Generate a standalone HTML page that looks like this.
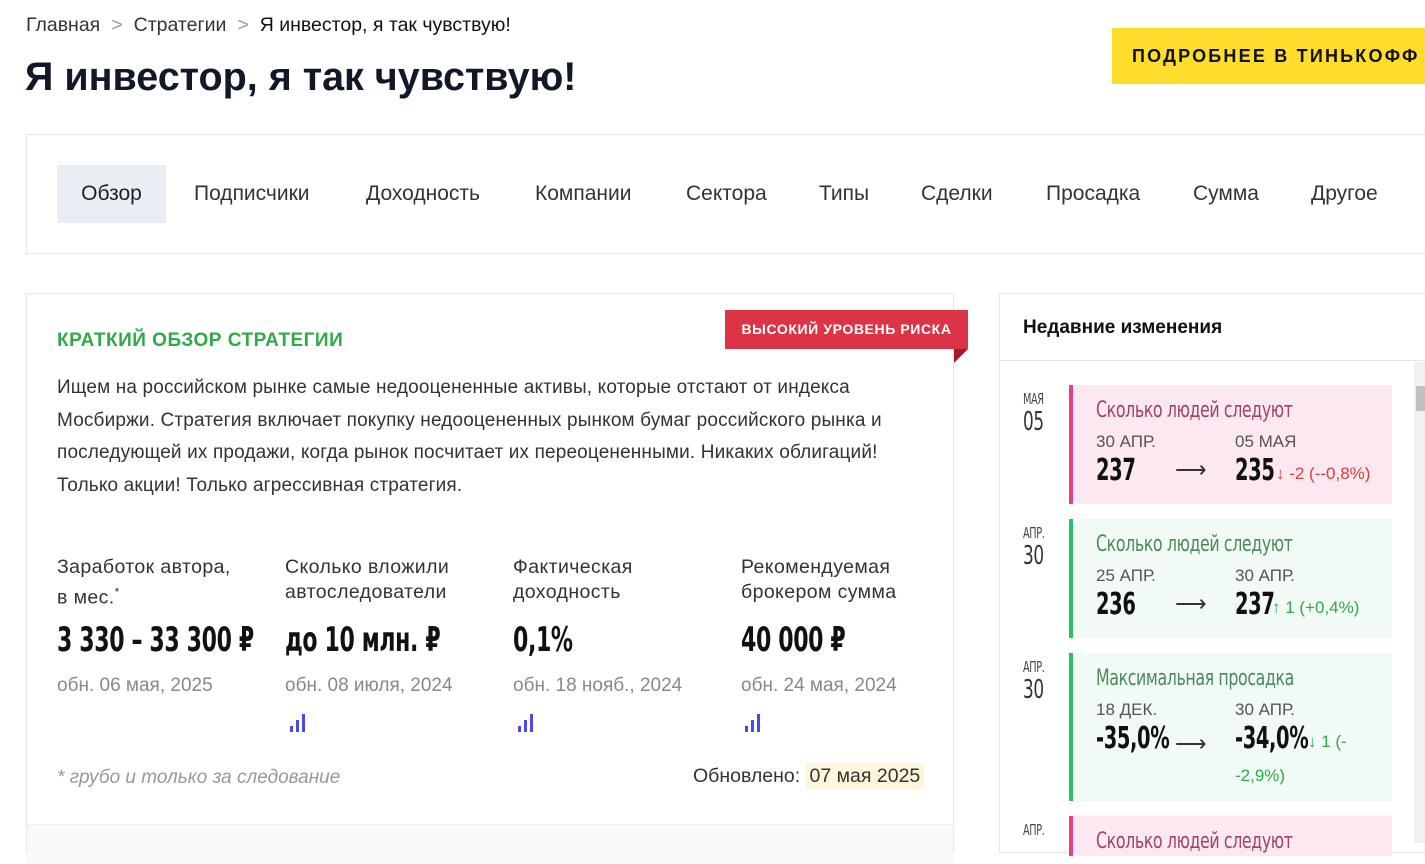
<!DOCTYPE html>
<html><head><meta charset="utf-8"><style>
*{box-sizing:border-box;margin:0;padding:0}
body{width:1425px;height:843px;overflow:hidden;background:#fff;font-family:"Liberation Sans",sans-serif;color:#222;position:relative}
.a{position:absolute}
.cond{font-family:"DejaVu Sans Condensed","Liberation Sans",sans-serif;font-weight:bold;display:inline-block;transform:scaleX(.72);transform-origin:left center;letter-spacing:-0.5px}
.bc{left:26px;top:14px;font-size:19.5px;color:#333}
.bc span.s{color:#999;margin:0 11px}
h1{position:absolute;left:25px;top:55px;font-size:39.5px;font-weight:bold;color:#111827}
.btn{left:1112px;top:28px;width:320px;height:56px;background:#ffdd2d;font-weight:bold;font-size:18px;letter-spacing:2.2px;line-height:56px;padding-left:20px;color:#111}
.tabs{left:26px;top:134px;width:1410px;height:120px;border:1px solid #e7e7e7}
.tab{position:absolute;top:30px;height:58px;line-height:58px;font-size:21px;color:#333}
.card{left:26px;top:293px;width:928px;height:560px;border:1px solid #e7e7e7}
.green{left:57px;top:330px;font-size:19px;font-weight:bold;color:#2eaa4a;letter-spacing:.5px}
.desc{left:57px;top:372px;width:870px;font-size:19px;line-height:32.5px;color:#333;letter-spacing:.15px}
.lbl{font-size:19.5px;line-height:25px;color:#333;top:555px;letter-spacing:.4px}
.val{top:620px;font-size:34px;color:#111;height:44px}
.upd{top:675px;font-size:19px;color:#888}
.bars{top:713px}
.red{left:725px;top:310px;width:243px;height:39px;background:#db3446;color:#fff;font-weight:bold;font-size:14px;line-height:39px;text-align:center;letter-spacing:.6px}
.fold{left:954px;top:349px;width:0;height:0;border-top:14px solid #a61b2b;border-right:14px solid transparent}
.side{left:999px;top:293px;width:440px;height:560px;border:1px solid #e7e7e7}
.ev{left:1069px;width:323px;padding-left:27px}
.ev.p{background:#fce8f0;border-left:4px solid #e83e8c}
.ev.g{background:#f1faf5;border-left:4px solid #28c266}
.ev .t{position:absolute;left:23px;top:12px;font-size:22px}
.ev .t .cond{font-weight:normal;transform:scaleX(.8)}
.p .t{color:#a0426a}.g .t{color:#4a8a5c}
.dt{font-size:17px;color:#555;position:absolute;top:47px}
.num{position:absolute;top:68px;font-size:30px;color:#111}
.mon{left:1023px;font-size:15px;color:#444}
.day{left:1023px;font-size:26px;color:#333}
.day .cond,.mon .cond{font-weight:normal}
</style></head><body>
<div class="a bc">Главная<span class="s">&gt;</span>Стратегии<span class="s">&gt;</span><span style="color:#111">Я инвестор, я так чувствую!</span></div>
<h1>Я инвестор, я так чувствую!</h1>
<div class="a btn">ПОДРОБНЕЕ В ТИНЬКОФФ</div>
<div class="a tabs">
<div class="tab" style="left:30px;width:109px;background:#e9eef4;text-align:center;color:#222">Обзор</div>
<div class="tab" style="left:167px">Подписчики</div>
<div class="tab" style="left:339px">Доходность</div>
<div class="tab" style="left:508px">Компании</div>
<div class="tab" style="left:659px">Сектора</div>
<div class="tab" style="left:792px">Типы</div>
<div class="tab" style="left:894px">Сделки</div>
<div class="tab" style="left:1019px">Просадка</div>
<div class="tab" style="left:1166px">Сумма</div>
<div class="tab" style="left:1284px">Другое</div>
</div>
<div class="a card"><div style="position:absolute;left:0;right:0;top:530px;height:40px;background:#f9f9f9;border-top:1px solid #eee"></div></div>
<div class="a green">КРАТКИЙ ОБЗОР СТРАТЕГИИ</div>
<div class="a red">ВЫСОКИЙ УРОВЕНЬ РИСКА</div>
<div class="a fold"></div>
<div class="a desc">Ищем на российском рынке самые недооцененные активы, которые отстают от индекса Мосбиржи. Стратегия включает покупку недооцененных рынком бумаг российского рынка и последующей их продажи, когда рынок посчитает их переоцененными. Никаких облигаций! Только акции! Только агрессивная стратегия.</div>
<div class="a lbl" style="left:57px">Заработок автора,<br>в мес.<sup style="font-size:12px">*</sup></div>
<div class="a lbl" style="left:285px">Сколько вложили<br>автоследователи</div>
<div class="a lbl" style="left:513px">Фактическая<br>доходность</div>
<div class="a lbl" style="left:741px">Рекомендуемая<br>брокером сумма</div>
<div class="a val" style="left:57px"><span class="cond">3 330 – 33 300 ₽</span></div>
<div class="a val" style="left:285px"><span class="cond">до 10 млн. ₽</span></div>
<div class="a val" style="left:513px"><span class="cond">0,1%</span></div>
<div class="a val" style="left:741px"><span class="cond">40 000 ₽</span></div>
<div class="a upd" style="left:57px">обн. 06 мая, 2025</div>
<div class="a upd" style="left:285px">обн. 08 июля, 2024</div>
<div class="a upd" style="left:513px">обн. 18 нояб., 2024</div>
<div class="a upd" style="left:741px">обн. 24 мая, 2024</div>
<svg class="a bars" style="left:290px" width="18" height="20"><rect x="0" y="13" width="3" height="6" fill="#4a4ae8"/><rect x="6" y="7" width="3" height="12" fill="#4a4ae8"/><rect x="12" y="1" width="3" height="18" fill="#4a4ae8"/></svg>
<svg class="a bars" style="left:518px" width="18" height="20"><rect x="0" y="13" width="3" height="6" fill="#4a4ae8"/><rect x="6" y="7" width="3" height="12" fill="#4a4ae8"/><rect x="12" y="1" width="3" height="18" fill="#4a4ae8"/></svg>
<svg class="a bars" style="left:745px" width="18" height="20"><rect x="0" y="13" width="3" height="6" fill="#4a4ae8"/><rect x="6" y="7" width="3" height="12" fill="#4a4ae8"/><rect x="12" y="1" width="3" height="18" fill="#4a4ae8"/></svg>
<div class="a" style="left:57px;top:767px;font-size:19px;color:#999;font-style:italic">* грубо и только за следование</div>
<div class="a" style="left:693px;top:765px;font-size:19.5px;color:#333">Обновлено: <span style="background:#fdf6da;padding:2px 4px">07 мая 2025</span></div>

<div class="a side"><div style="position:absolute;left:0;right:0;top:66px;border-top:1px solid #e7e7e7"></div></div>
<div class="a" style="left:1023px;top:317px;font-size:19px;font-weight:bold;color:#111">Недавние изменения</div>
<div class="a" style="left:1414px;top:362px;width:11px;height:481px;background:#f1f1f1"></div>
<div class="a" style="left:1416px;top:386px;width:9px;height:25px;background:#c1c1c1"></div>

<div class="a mon" style="top:390px"><span class="cond">МАЯ</span></div><div class="a day" style="top:406px"><span class="cond">05</span></div>
<div class="a ev p" style="top:385px;height:119px"><div class="t"><span class="cond">Сколько людей следуют</span></div>
<div class="dt" style="left:23px">30 АПР.</div><div class="dt" style="left:162px">05 МАЯ</div>
<div class="num" style="left:23px"><span class="cond">237</span></div><div class="a" style="left:102px;top:72px;font-size:22px;color:#333">⟶</div>
<div class="num" style="left:162px"><span class="cond">235</span></div><div class="a" style="left:203px;top:79px;font-size:17px;color:#e03a3a">↓ -2 (--0,8%)</div></div>

<div class="a mon" style="top:524px"><span class="cond">АПР.</span></div><div class="a day" style="top:540px"><span class="cond">30</span></div>
<div class="a ev g" style="top:519px;height:119px"><div class="t"><span class="cond">Сколько людей следуют</span></div>
<div class="dt" style="left:23px">25 АПР.</div><div class="dt" style="left:162px">30 АПР.</div>
<div class="num" style="left:23px"><span class="cond">236</span></div><div class="a" style="left:102px;top:72px;font-size:22px;color:#333">⟶</div>
<div class="num" style="left:162px"><span class="cond">237</span></div><div class="a" style="left:199px;top:79px;font-size:17px;color:#2eaa4a">↑ 1 (+0,4%)</div></div>

<div class="a mon" style="top:658px"><span class="cond">АПР.</span></div><div class="a day" style="top:674px"><span class="cond">30</span></div>
<div class="a ev g" style="top:653px;height:148px"><div class="t"><span class="cond">Максимальная просадка</span></div>
<div class="dt" style="left:23px">18 ДЕК.</div><div class="dt" style="left:162px">30 АПР.</div>
<div class="num" style="left:23px"><span class="cond">-35,0%</span></div><div class="a" style="left:102px;top:78px;font-size:22px;color:#333">⟶</div>
<div class="num" style="left:162px"><span class="cond">-34,0%</span></div><div class="a" style="left:235px;top:79px;font-size:17px;color:#2eaa4a">↓ 1 (-</div>
<div class="a" style="left:162px;top:113px;font-size:17px;color:#2eaa4a">-2,9%)</div></div>

<div class="a mon" style="top:821px"><span class="cond">АПР.</span></div>
<div class="a ev p" style="top:816px;height:40px"><div class="t"><span class="cond">Сколько людей следуют</span></div></div>
</body></html>
